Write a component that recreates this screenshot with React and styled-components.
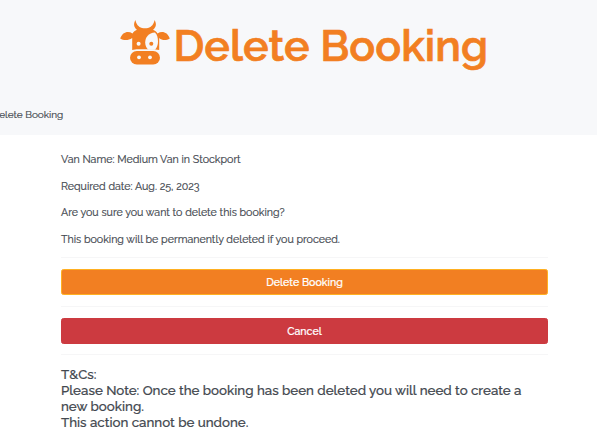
import React from 'react';
import styled, { createGlobalStyle } from 'styled-components';

const GlobalStyle = createGlobalStyle`
  * { box-sizing: border-box; }
  body {
    margin: 0;
    background: #fff;
    color: #43484f;
    font: 400 10.67px/16px Raleway, Lato, sans-serif;
    -webkit-text-stroke: 0.2px currentColor;
    overflow: hidden;
    -webkit-font-smoothing: antialiased;
  }
`;

const Header = styled.header`
  height: 135px;
  background: #f7f8fa;
  display: flex;
  flex-direction: column;
  padding-top: 20px;
`;

const Title = styled.h1`
  margin: 0;
  padding-left: 120px;
  display: flex;
  color: #f27f22;
  font-size: 43px;
  font-weight: 600;
  line-height: 53px;
  letter-spacing: 0.05px;
  -webkit-text-stroke: 0.7px currentColor;
  white-space: nowrap;
`;

const CowIcon = styled.svg`
  width: 50px;
  height: 46px;
  margin-right: 3.5px;
  flex: none;
`;

const Breadcrumb = styled.nav`
  margin: 34px 0 0 -8px;
  font-size: 10px;
  line-height: 16px;
`;

const Main = styled.main`
  width: 487px;
  margin-left: 61px;
  padding-top: 16px;
`;

const Line = styled.p`
  margin: 0 0 10.6px;
`;

const Rule = styled.hr`
  height: 1px;
  border: 0;
  background: #f6f6f7;
  margin: ${(p) => p.$margin};
`;

const Button = styled.button`
  display: block;
  width: 100%;
  height: 26px;
  padding: 0;
  border: 1px solid ${(p) => p.$edge};
  border-radius: 2.5px;
  background: ${(p) => p.$fill};
  color: #fff;
  font: 500 10.64px/16px Raleway, Lato, sans-serif;
`;

const Terms = styled.h5`
  margin: 0;
  font-size: 13.33px;
  font-weight: 500;
  line-height: 16px;
`;

function Cow() {
  return (
    <CowIcon viewBox="0 0 50 46" aria-hidden="true">
      <path
        fill="#f27f22"
        d="M15.500 0C13 4 14 7.500 17 9.800C15 10.500 13.500 12 12.500 13.500C8 10.500 2.500 12 .2 18.500C4 20.800 8.500 20.500 12.200 18V30C14 29.300 16 29.200 18 29.200H32C34.500 29.200 37 29.400 39.200 30V18C42 20.500 46 20.800 49.800 18.500C47.500 12 42 10.500 37.500 13.500C36.500 12 35 10.500 33 9.800C36 7.500 37 4 34.500 0C34 4 31.500 7 28 8Q25 8.500 22 8C18.500 7 16 4 15.500 0Z"
      />
      <path
        fill="#f7f8fa"
        d="M35 12.500C28.500 12.800 25.200 17.500 25.200 22.500C25.200 26 26.500 28 28.500 29.800H35C37 27.500 38 24.500 38 21.500C38 17.500 37 14.500 35 12.500Z"
      />
      <circle cx="18.600" cy="23.700" r="2" fill="#f7f8fa" />
      <circle cx="31.300" cy="23.700" r="2" fill="#f27f22" />
      <rect x="10" y="31" width="30" height="13.600" rx="6.800" fill="#f27f22" />
      <circle cx="19" cy="37.300" r="1.900" fill="#f7f8fa" />
      <circle cx="30" cy="37.300" r="1.900" fill="#f7f8fa" />
    </CowIcon>
  );
}

export default function App() {
  return (
    <>
      <GlobalStyle />
      <Header>
        <Title><Cow />Delete Booking</Title>
        <Breadcrumb>Delete Booking</Breadcrumb>
      </Header>
      <Main>
        <Line>Van Name: Medium Van in Stockport</Line>
        <Line>Required date: Aug. 25, 2023</Line>
        <Line>Are you sure you want to delete this booking?</Line>
        <Line>This booking will be permanently deleted if you proceed.</Line>
        <Rule $margin="0 0 10.600px" />
        <Button $fill="#f27f22" $edge="#ffb022">Delete Booking</Button>
        <Rule $margin="11px 0 11px" />
        <Button $fill="#cc3a40" $edge="#cc3a40">Cancel</Button>
        <Rule $margin="10px 0 11px" />
        <Terms>
          T&amp;Cs:<br />
          Please Note: Once the booking has been deleted you will need to create a new booking.<br />
          This action cannot be undone.
        </Terms>
      </Main>
    </>
  );
}
